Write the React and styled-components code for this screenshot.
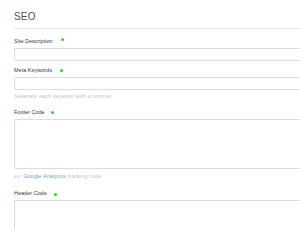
import React from 'react'
import styled, { createGlobalStyle } from 'styled-components'

const Global = createGlobalStyle`
  html, body {
    margin: 0;
    padding: 0;
    background: #ffffff;
    overflow: hidden;
  }
  body {
    font-family: "Liberation Sans", Arial, sans-serif;
  }
`

const Page = styled.div`
  width: 340px;
  padding: 12px 0 0 14px;
`

const Heading = styled.h2`
  margin: 0;
  font-size: 10px;
  line-height: 10px;
  font-weight: normal;
  color: #505050;
  letter-spacing: 0.2px;
  padding-bottom: 6px;
  border-bottom: 1px solid #e6e6e6;
`

const Form = styled.div`
  display: flex;
  flex-direction: column;
  padding-top: 9px;
`

const Field = styled.div`
  display: flex;
  flex-direction: column;
  margin-bottom: ${p => p.$gap || 6}px;
`

const Label = styled.label`
  display: flex;
  align-items: center;
  font-size: 5.5px;
  line-height: 6px;
  color: #3a3a3a;
  margin-bottom: 4px;
`

const Dot = styled.span`
  width: 3px;
  height: 3px;
  border-radius: 50%;
  background: #2fd12f;
  margin-left: ${p => p.$offset || 7}px;
  margin-top: ${p => p.$drop || 0}px;
`

const Input = styled.div`
  box-sizing: border-box;
  height: ${p => p.$h || 13}px;
  border: 1px solid #dcdcdc;
  border-radius: 1px;
  background: #fff;
`

const Help = styled.div`
  font-size: 5.5px;
  line-height: 6px;
  color: #c4c4c4;
  margin-top: ${p => p.$top || 3}px;
  letter-spacing: 0.1px;
`

const Link = styled.span`
  color: #6f9fc4;
`

export default function App() {
  return (
    <>
      <Global />
      <Page>
        <Heading>SEO</Heading>
        <Form>
          <Field $gap={6}>
            <Label>Site Description<Dot $offset={8} $drop={-3} /></Label>
            <Input />
          </Field>
          <Field $gap={10}>
            <Label>Meta Keywords<Dot $offset={8} $drop={1} /></Label>
            <Input />
            <Help>Separate each keyword with a comma.</Help>
          </Field>
          <Field $gap={10}>
            <Label>Footer Code<Dot $offset={6} /></Label>
            <Input $h={50} />
            <Help $top={4}>ex. <Link>Google Analytics</Link> tracking code</Help>
          </Field>
          <Field>
            <Label>Header Code<Dot $offset={7} $drop={4} /></Label>
            <Input $h={50} />
          </Field>
        </Form>
      </Page>
    </>
  )
}
